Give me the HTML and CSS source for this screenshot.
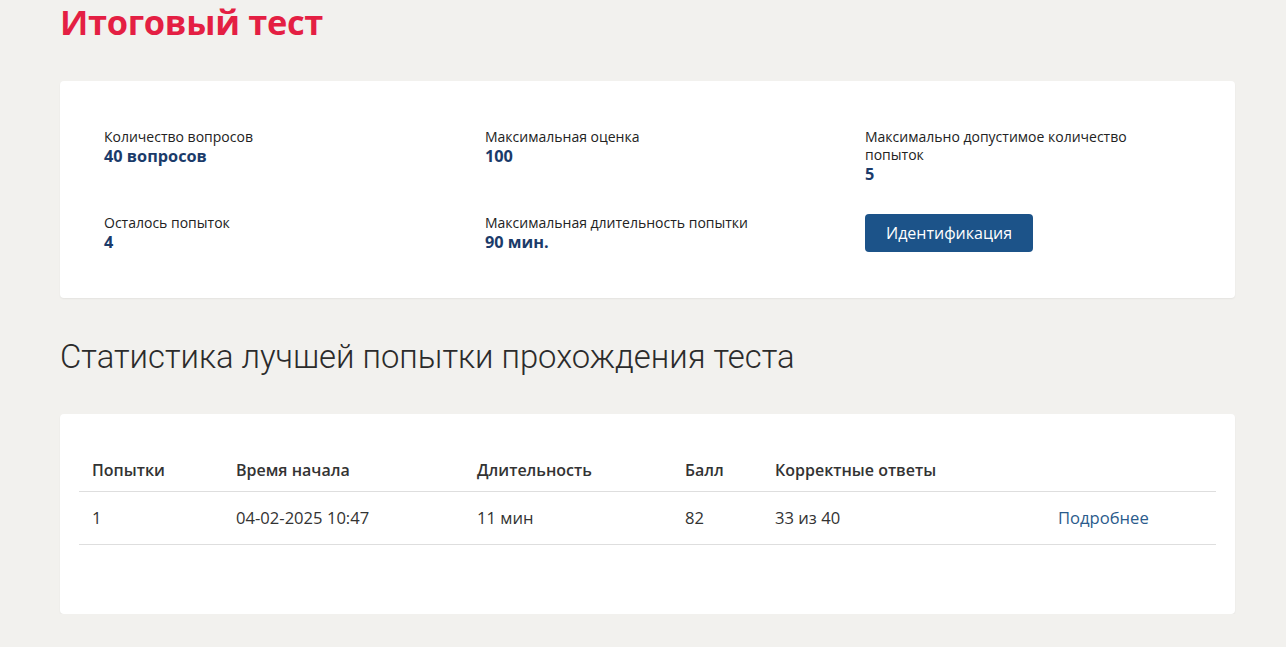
FILE: index.html
```html
<!DOCTYPE html>
<html lang="ru">
<head>
<meta charset="utf-8">
<title>Итоговый тест</title>
<link rel="stylesheet" href="styles.css">
</head>
<body>
<div class="page">
	<h1 class="title">Итоговый тест</h1>

	<div class="card info">
		<div class="info-grid">
			<div class="item">
				<div class="label">Количество вопросов</div>
				<div class="value">40 вопросов</div>
			</div>
			<div class="item">
				<div class="label">Максимальная оценка</div>
				<div class="value">100</div>
			</div>
			<div class="item">
				<div class="label">Максимально допустимое количество попыток</div>
				<div class="value">5</div>
			</div>
			<div class="item">
				<div class="label">Осталось попыток</div>
				<div class="value">4</div>
			</div>
			<div class="item">
				<div class="label">Максимальная длительность попытки</div>
				<div class="value">90 мин.</div>
			</div>
			<div class="item">
				<button class="btn" type="button">Идентификация</button>
			</div>
		</div>
	</div>

	<h2 class="subtitle">Статистика лучшей попытки прохождения теста</h2>

	<div class="card stats">
		<table class="attempts">
			<thead>
				<tr>
					<th class="c1">Попытки</th>
					<th class="c2">Время начала</th>
					<th class="c3">Длительность</th>
					<th class="c4">Балл</th>
					<th class="c5">Корректные ответы</th>
					<th></th>
				</tr>
			</thead>
			<tbody>
				<tr>
					<td>1</td>
					<td>04-02-2025 10:47</td>
					<td>11 мин</td>
					<td>82</td>
					<td>33 из 40</td>
					<td><a href="#" class="more">Подробнее</a></td>
				</tr>
			</tbody>
		</table>
	</div>
</div>
</body>
</html>
```

FILE: styles.css
```css
*
{
	box-sizing:border-box;
}
body
{
	margin:0;
	background-color:#f2f1ee;
	font-family:"Open Sans", "Noto Sans", sans-serif;
	color:#222;
}
.page
{
	padding:0 51px 0 60px;
}
.title
{
	margin:0;
	height:81px;
	font-size:34.4px;
	line-height:44px;
	font-weight:700;
	color:#e41f43;
	letter-spacing:-0.3px;
}
.card
{
	background-color:#fff;
	border-radius:4px;
	box-shadow:0 1px 2px rgba(0,0,0,0.06);
}
.info
{
	padding:47px 0 46px 44px;
}
.info-grid
{
	display:grid;
	grid-template-columns:381px 380px 1fr;
	row-gap:30px;
}
.item
{
	padding-right:90px;
}
.item:nth-child(3n)
{
	padding-right:60px;
}
.label
{
	font-size:14px;
	line-height:18px;
	color:#222;
}
.value
{
	font-size:16.3px;
	line-height:20px;
	font-weight:700;
	color:#1b3b6a;
}
.btn
{
	height:38px;
	padding:0 21px;
	border:none;
	border-radius:4px;
	background-color:#1c5389;
	color:#fff;
	font-family:"Open Sans", "Noto Sans", sans-serif;
	font-size:16px;
}
.subtitle
{
	margin:0;
	padding:40px 0 38px 0;
	font-family:Roboto, "Noto Sans", sans-serif;
	font-weight:300;
	font-size:32.8px;
	line-height:38px;
	color:#2b2b2b;
}
.stats
{
	padding:34px 19px 69px 19px;
}
.attempts
{
	width:100%;
	border-collapse:collapse;
	font-size:16.6px;
	color:#333;
}
.attempts th
{
	text-align:left;
	font-size:16px;
	font-weight:600;
	padding:11px 13px 10px 13px;
	border-bottom:1px solid #dedede;
}
.attempts td
{
	padding:14px 13px 15px 13px;
	border-bottom:1px solid #dedede;
}
.c1 { width:144px; }
.c2 { width:241px; }
.c3 { width:208px; }
.c4 { width:90px; }
.c5 { width:283px; }
.more
{
	color:#2a5b8c;
	text-decoration:none;
}
```
